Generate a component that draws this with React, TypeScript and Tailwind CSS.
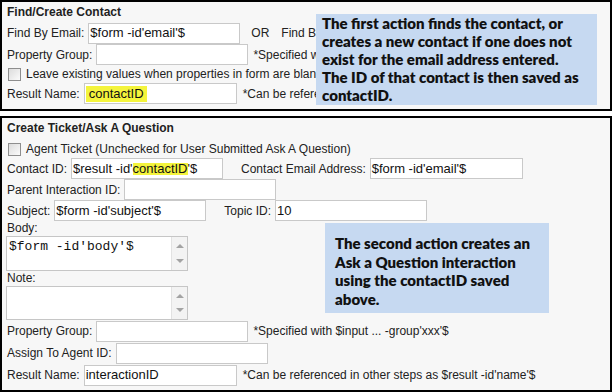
import React from "react";

function Field({
  w = "w-[152px]",
  children,
}: {
  w?: string;
  children?: React.ReactNode;
}) {
  return (
    <div
      className={`flex h-[21px] ${w} shrink-0 items-center overflow-hidden whitespace-nowrap border border-[#c9c9c9] bg-white px-[1px] text-[13px] text-[#111]`}
    >
      {children}
    </div>
  );
}

function Check() {
  return (
    <span className="ml-[1px] mr-[5px] inline-block h-[13px] w-[13px] shrink-0 border border-[#8e8e8e] bg-gradient-to-br from-[#dcdcdc] to-[#fbfbfb]" />
  );
}

function TextBox({ value }: { value?: string }) {
  return (
    <div className="ml-[-1px] flex h-full w-[182px] border border-[#c6c6c6] bg-white">
      <div className="flex-1 px-[2px] pt-[3px] font-['Liberation_Mono','Courier_New',monospace] text-[13px] leading-[14px] text-[#111]">
        {value}
      </div>
      <div className="flex w-[16px] flex-col items-center justify-between border-l border-[#e2e2e2] bg-[#f3f3f3] py-[7px]">
        <span className="h-0 w-0 border-x-[4px] border-b-[4px] border-x-transparent border-b-[#a3a3a3]" />
        <span className="h-0 w-0 border-x-[4px] border-t-[4px] border-x-transparent border-t-[#a3a3a3]" />
      </div>
    </div>
  );
}

const hl = "bg-[#f4f43c]";
// rows in the first panel end where the callout starts
const clip = "w-[309px] overflow-hidden";

export default function App() {
  return (
    <div className="relative h-[392px] w-[612px] overflow-hidden bg-white font-['Liberation_Sans',Arial,sans-serif] text-[12px] text-[#222]">
      {/* Find / Create Contact */}
      <div className="flex h-[111px] flex-col overflow-hidden border-2 border-black bg-[#f7f7f7] pl-[5px]">
        <div className="flex h-[20px] items-center font-bold">Find/Create Contact</div>
        <div className={`flex h-[22px] items-center whitespace-nowrap ${clip}`}>
          <span>Find By Email:</span>
          <div className="ml-[4px]">
            <Field>$form -id'email'$</Field>
          </div>
          <span className="ml-[11px]">OR</span>
          <span className="ml-[12px]">Find By</span>
        </div>
        <div className={`flex h-[21px] items-center whitespace-nowrap ${clip}`}>
          <span>Property Group:</span>
          <div className="ml-[4px]">
            <Field />
          </div>
          <span className="ml-[5px]">*Specified w</span>
        </div>
        <div className={`flex h-[18px] items-center whitespace-nowrap ${clip}`}>
          <Check />
          <span>Leave existing values when properties in form are blank</span>
        </div>
        <div className={`flex h-[21px] items-center whitespace-nowrap ${clip}`}>
          <span>Result Name:</span>
          <div className="ml-[4px]">
            <Field w="w-[153px]">
              <span className={`flex h-[16px] items-center px-[3px] ${hl}`}>contactID</span>
            </Field>
          </div>
          <span className="ml-[6px]">*Can be referenced</span>
        </div>
      </div>

      {/* Create Ticket / Ask A Question */}
      <div className="mt-[5px] flex h-[276px] flex-col overflow-hidden border-2 border-black bg-[#f7f7f7] pl-[5px]">
        <div className="flex h-[20px] items-center font-bold">Create Ticket/Ask A Question</div>
        <div className="flex h-[20px] items-center whitespace-nowrap pt-[2px]">
          <Check />
          <span>Agent Ticket (Unchecked for User Submitted Ask A Question)</span>
        </div>
        <div className="flex h-[21px] items-center whitespace-nowrap">
          <span>Contact ID:</span>
          <div className="ml-[4px]">
            <Field>
              $result -id'<span className={`leading-[12px] ${hl}`}>contactID</span>'$
            </Field>
          </div>
          <span className="ml-[18px]">Contact Email Address:</span>
          <div className="ml-[4px]">
            <Field w="w-[153px]">$form -id'email'$</Field>
          </div>
        </div>
        <div className="flex h-[21px] items-center whitespace-nowrap">
          <span>Parent Interaction ID:</span>
          <div className="ml-[4px]">
            <Field />
          </div>
        </div>
        <div className="flex h-[21px] items-center whitespace-nowrap">
          <span>Subject:</span>
          <div className="ml-[4px]">
            <Field>$form -id'subject'$</Field>
          </div>
          <span className="ml-[18px]">Topic ID:</span>
          <div className="ml-[4px]">
            <Field>10</Field>
          </div>
        </div>
        <div className="flex h-[13px] items-center">Body:</div>
        <div className="mt-[2px] h-[35px]">
          <TextBox value="$form -id'body'$" />
        </div>
        <div className="flex h-[14px] items-center">Note:</div>
        <div className="mt-[1px] h-[34px]">
          <TextBox />
        </div>
        <div className="flex h-[22px] items-center whitespace-nowrap">
          <span>Property Group:</span>
          <div className="ml-[4px]">
            <Field />
          </div>
          <span className="ml-[5px]">*Specified with $input ... -group'xxx'$</span>
        </div>
        <div className="flex h-[22px] items-center whitespace-nowrap">
          <span>Assign To Agent ID:</span>
          <div className="ml-[4px]">
            <Field />
          </div>
        </div>
        <div className="flex h-[22px] items-center whitespace-nowrap">
          <span>Result Name:</span>
          <div className="ml-[4px]">
            <Field w="w-[153px]">interactionID</Field>
          </div>
          <span className="ml-[6px]">*Can be referenced in other steps as $result -id'name'$</span>
        </div>
      </div>

      {/* callouts */}
      <div className="absolute left-[316px] top-[14px] h-[91px] w-[281px] bg-[#c6d9f1] pl-[6px] font-['Lato','Open_Sans',sans-serif] text-[15px] font-extrabold leading-[18px] text-[#111]">
        The first action finds the contact, or
        <br />
        creates a new contact if one does not
        <br />
        exist for the email address entered.
        <br />
        The ID of that contact is then saved as
        <br />
        contactID.
      </div>
      <div className="absolute left-[325px] top-[223px] h-[90px] w-[224px] bg-[#c6d9f1] pl-[10px] pt-[11px] font-['Lato','Open_Sans',sans-serif] text-[15px] font-extrabold leading-[18.5px] text-[#111]">
        The second action creates an
        <br />
        Ask a Question interaction
        <br />
        using the contactID saved
        <br />
        above.
      </div>
    </div>
  );
}
